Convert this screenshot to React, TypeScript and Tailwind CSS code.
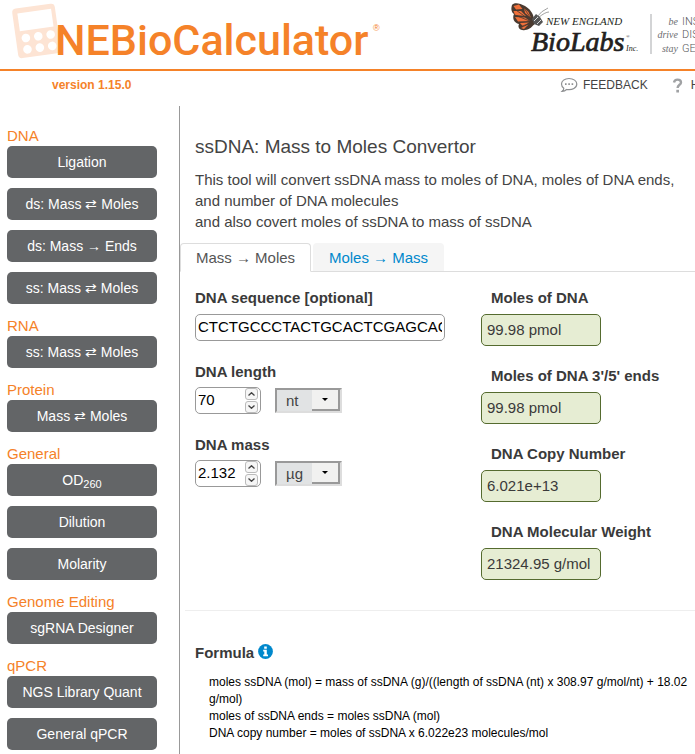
import { useState } from "react";
import type { ReactNode } from "react";

function Arrow() {
  return <span className="font-['Liberation_Serif',serif]">→</span>;
}

const groups: { title: string; items: ReactNode[] }[] = [
  {
    title: "DNA",
    items: [
      "Ligation",
      "ds: Mass ⇄ Moles",
      <>
        ds: Mass <Arrow /> Ends
      </>,
      "ss: Mass ⇄ Moles",
    ],
  },
  { title: "RNA", items: ["ss: Mass ⇄ Moles"] },
  { title: "Protein", items: ["Mass ⇄ Moles"] },
  {
    title: "General",
    items: [
      <>
        OD<sub className="text-[11px]">260</sub>
      </>,
      "Dilution",
      "Molarity",
    ],
  },
  { title: "Genome Editing", items: ["sgRNA Designer"] },
  { title: "qPCR", items: ["NGS Library Quant", "General qPCR"] },
];

const results = [
  { id: "moles", label: "Moles of DNA", value: "99.98 pmol" },
  { id: "ends", label: "Moles of DNA 3'/5' ends", value: "99.98 pmol" },
  { id: "copies", label: "DNA Copy Number", value: "6.021e+13" },
  { id: "weight", label: "DNA Molecular Weight", value: "21324.95 g/mol" },
];

function CalculatorLogo() {
  return (
    <svg className="h-[68px] w-[400px] shrink-0" viewBox="0 0 400 68" role="img" aria-label="NEBioCalculator">
      <g transform="rotate(-8 36 31)">
        <rect x="15" y="6" width="43" height="50" rx="4" fill="#fde4d4" />
        <rect x="20" y="11" width="34" height="18" fill="#fff" />
        {[0, 1, 2].map((i) => (
          <g key={i} fill="#fff">
            <circle cx={25 + i * 12.5} cy="36.500" r="4.300" />
            <circle cx={25 + i * 12.5} cy="48" r="4.300" />
          </g>
        ))}
      </g>
      <text x="55" y="55" fontSize="43" fontWeight="500" fill="#f58229" fontFamily="Roboto, sans-serif">
        NEBioCalculator
      </text>
      <text x="373" y="31" fontSize="9" fill="#f58229" fontFamily="Liberation Sans, sans-serif">
        ®
      </text>
    </svg>
  );
}

function BioLabsLogo() {
  return (
    <svg className="h-[68px] w-[270px] shrink-0" viewBox="510 0 270 68" role="img" aria-label="New England BioLabs Inc.">
      <path
        d="M512 5C514 2 520 3 525 6C530 9 533 13 534 19L536 23C532 26 530 30 525 30C521 31 517 28 519 24C514 23 512 18 514 14C511 12 511 8 512 5Z"
        fill="#4a3a30"
      />
      <path
        d="M513.500 6L519 4.500L522.500 9L516 9.500ZM513.500 11L521 11L526 16L515 15ZM524 8L528.500 12L531 18L525 13ZM515 17L525 17.500L530 21L518 21.500ZM520 23L529 22.500L523 26.500ZM521 28L528.500 24.500L524 29Z"
        fill="#f0703a"
      />
      <path d="M513 8L530 20M522 5L532 20M515 15L532 22M520 27L533 22" stroke="#4a3a30" strokeWidth="0.800" fill="none" />
      <path d="M532 19L536 14L540 17L543 22L539 26L534 24Z" fill="#555" />
      <path d="M534 21L538 17M537 24L541 20" stroke="#ddd" strokeWidth="1" />
      <path d="M537 17Q541 11 548 8M538 18Q545 12 549 12" stroke="#777" strokeWidth="0.700" fill="none" />
      <g fontFamily="Liberation Serif, serif" fontStyle="italic" fill="#231f20">
        <text x="546" y="25" fontSize="11">
          NEW ENGLAND
        </text>
        <text x="531" y="51" fontSize="28" stroke="#231f20" strokeWidth="0.700">
          BioLabs
        </text>
        <text x="626" y="51" fontSize="8">
          Inc.
        </text>
        <text x="626" y="38" fontSize="5">
          ®
        </text>
      </g>
      <path d="M651 14V54" stroke="#a7a9ac" strokeWidth="1" />
      <g fontFamily="Liberation Serif, serif" fontStyle="italic" fontSize="10" fill="#6d6e71" textAnchor="end">
        <text x="678" y="25">be</text>
        <text x="678" y="38">drive</text>
        <text x="678" y="52">stay</text>
      </g>
      <g fontFamily="Roboto, sans-serif" fontWeight="300" fontSize="11" fill="#58595b">
        <text x="682" y="25">INSPIRED</text>
        <text x="682" y="38">DISCOVERY</text>
        <text x="682" y="52">GENUINE</text>
      </g>
    </svg>
  );
}

function FeedbackIcon() {
  return (
    <svg className="h-4 w-[18px]" viewBox="0 0 18 16" fill="none" stroke="#8f9193" strokeWidth="1.200" aria-hidden="true">
      <path d="M9 1.500C4.500 1.500 1.500 4 1.500 7C1.500 8.800 2.400 10.200 3.800 11.200C3.800 12.500 3 13.600 2.200 14.300C4 14.200 5.500 13.500 6.600 12.500C12.500 13.500 16.800 10.800 16.800 7C16.800 4 13.500 1.500 9 1.500Z" />
      <path d="M5 7.200h1.600M8.300 7.200h1.600M11.600 7.200h1.600" strokeWidth="1.800" />
    </svg>
  );
}

function HelpIcon() {
  return (
    <svg className="h-[15px] w-[11px]" viewBox="0 0 11 15" fill="none" aria-hidden="true">
      <path
        d="M2 4.500C2.300 2.700 3.700 1.600 5.500 1.600C7.600 1.600 9 2.800 9 4.400C9 6.800 5.600 6.800 5.600 10"
        stroke="#a0a2a4"
        strokeWidth="2.400"
      />
      <rect x="4.300" y="11.800" width="2.700" height="2.700" fill="#a0a2a4" />
    </svg>
  );
}

function InfoIcon() {
  return (
    <svg className="mb-[3px] h-[15px] w-[15px]" viewBox="0 0 15 15" aria-hidden="true">
      <circle cx="7.500" cy="7.500" r="7.400" fill="#0088cc" />
      <path d="M6.200 2.500h2.600v2.200H6.200ZM5.200 5.700h3.600v4.700h1.200v1.800H5.200v-1.800h1.100V7.500H5.200Z" fill="#fff" />
    </svg>
  );
}

function Spinner({ id, label, initial, step }: { id: string; label: string; initial: string; step: number }) {
  const [value, setValue] = useState(initial);
  const bump = (by: number) => setValue(String(Number((Number(value) + by).toFixed(3))));
  const arrow = "flex h-3 w-[13px] items-center justify-center rounded-[3px] border border-[#bbb] bg-[#f6f6f6]";
  return (
    <div className="flex h-[27px] w-[66px] items-center rounded-[5px] border border-[#999] bg-white pr-0.5">
      <input
        id={id}
        type="text"
        inputMode="decimal"
        className="w-0 grow bg-transparent pl-0.5 text-[15px] text-black outline-none"
        value={value}
        onChange={(e) => setValue(e.target.value)}
      />
      <div className="flex flex-col gap-px">
        <button type="button" className={arrow} aria-label={"Increase " + label} onClick={() => bump(step)}>
          <svg className="h-1 w-[7px]" viewBox="0 0 7 4" fill="none" stroke="#444" strokeWidth="1.300">
            <path d="M0.500 3.500L3.500 0.700L6.500 3.500" />
          </svg>
        </button>
        <button type="button" className={arrow} aria-label={"Decrease " + label} onClick={() => bump(-step)}>
          <svg className="h-1 w-[7px]" viewBox="0 0 7 4" fill="none" stroke="#444" strokeWidth="1.300">
            <path d="M0.500 0.500L3.500 3.300L6.500 0.500" />
          </svg>
        </button>
      </div>
    </div>
  );
}

function UnitSelect({ label, options }: { label: string; options: string[] }) {
  return (
    <div className="relative h-[25px] w-[67px] border-2 border-t-[#999] border-r-[#ddd] border-b-[#ddd] border-l-[#999] bg-[#e1e3e4]">
      <select
        aria-label={label}
        className="h-full w-full appearance-none bg-transparent pl-[9px] text-[15px] leading-5 text-[#444] outline-none"
      >
        {options.map((o) => (
          <option key={o}>{o}</option>
        ))}
      </select>
      <span className="pointer-events-none absolute inset-y-0 right-0 flex w-7 items-center justify-center border-r-2 border-b-2 border-[#999] bg-[#f1f1f0]">
        <svg className="h-[3px] w-[6px]" viewBox="0 0 6 3">
          <path d="M0 0H6L3 3Z" fill="#000" />
        </svg>
      </span>
    </div>
  );
}

export default function App() {
  const [sequence, setSequence] = useState("CTCTGCCCTACTGCACTCGAGCACTGACTGCATCGAGGTCAACTGCCATGGACTTCAGCTAGCATCGATC");
  return (
    <div className="min-h-screen overflow-hidden bg-white font-['Liberation_Sans',Arial,sans-serif] text-[15px] text-[#444]">
      <header className="flex h-[71px] gap-[110px] border-b-2 border-[#f58229]">
        <CalculatorLogo />
        <BioLabsLogo />
      </header>
      <nav className="flex h-7 items-center text-xs whitespace-nowrap">
        <p className="w-[560px] shrink-0 pl-[52px] font-bold text-[#f58229]">version 1.15.0</p>
        <a href="#feedback" className="mr-6 flex shrink-0 items-center gap-[5px]">
          <FeedbackIcon />
          FEEDBACK
        </a>
        <a href="#help" className="flex shrink-0 items-center gap-2">
          <HelpIcon />
          HELP
        </a>
      </nav>

      <div className="flex pt-[7px]">
        <aside className="w-[179px] shrink-0 pt-[18px] pl-[7px]">
          {groups.map((g) => (
            <section key={g.title}>
              <h2 className="h-[22px] pt-px leading-[22px] text-[#f58229]">{g.title}</h2>
              {g.items.map((item, i) => (
                <button
                  key={i}
                  type="button"
                  className="mb-2.5 block h-8 w-[150px] rounded-[5px] bg-[#636567] text-center text-sm text-white"
                >
                  {item}
                </button>
              ))}
            </section>
          ))}
        </aside>

        <main className="min-w-0 grow border-l border-[#999]">
          <div className="px-[15px] pt-[30px]">
            <h1 className="text-[19px] leading-[22px]">ssDNA: Mass to Moles Convertor</h1>
            <p className="mt-[11px] leading-[21px]">
              This tool will convert ssDNA mass to moles of DNA, moles of DNA ends, and number of DNA molecules
              <br />
              and also covert moles of ssDNA to mass of ssDNA
            </p>
          </div>

          <div role="tablist" className="mt-[11px] flex gap-0.5 border-b border-[#ddd]">
            <button
              type="button"
              role="tab"
              aria-selected="true"
              className="-mb-px h-[29px] w-[131px] rounded-t border border-[#ddd] border-b-white bg-white pt-0.5 text-[#555]"
            >
              Mass <Arrow /> Moles
            </button>
            <button
              type="button"
              role="tab"
              aria-selected="false"
              className="h-7 w-[131px] rounded-t bg-[#f5f5f5] pt-0.5 text-[#0088cc]"
            >
              Moles <Arrow /> Mass
            </button>
          </div>

          <div className="flex pt-[15px] pl-[15px] text-[#3a3a3a]">
            <div className="flex w-[286px] shrink-0 flex-col items-start">
              <label htmlFor="sequence" className="leading-[22px] font-bold">
                DNA sequence [optional]
              </label>
              <input
                id="sequence"
                className="mt-[5px] mb-5 h-[27px] w-[250px] rounded-[5px] border border-[#999] px-0.5 pb-0.5 text-[15px] text-black"
                value={sequence}
                onChange={(e) => setSequence(e.target.value)}
              />
              <label htmlFor="length" className="leading-[22px] font-bold">
                DNA length
              </label>
              <div className="mt-1 mb-5 flex items-center gap-3.5">
                <Spinner id="length" label="length" initial="70" step={1} />
                <UnitSelect label="Length unit" options={["nt", "kb"]} />
              </div>
              <label htmlFor="mass" className="leading-[22px] font-bold">
                DNA mass
              </label>
              <div className="mt-1 flex items-center gap-3.5">
                <Spinner id="mass" label="mass" initial="2.132" step={0.1} />
                <UnitSelect label="Mass unit" options={["µg", "ng", "pg"]} />
              </div>
            </div>
            <div>
              {results.map((r) => (
                <div key={r.id} className="h-[78px]">
                  <label htmlFor={r.id} className="block pl-2.5 leading-[22px] font-bold">
                    {r.label}
                  </label>
                  <output
                    id={r.id}
                    className="mt-[5px] block h-8 w-[120px] rounded-[5px] border border-[#556b2f] bg-[#e6edd3] pl-[5px] leading-[30px] whitespace-nowrap"
                  >
                    {r.value}
                  </output>
                </div>
              ))}
            </div>
          </div>

          <hr className="mt-[11px] ml-[5px] border-[#eee]" />

          <section className="pt-[31px] pl-[15px]">
            <h2 className="flex items-center gap-1 leading-[22px] font-bold text-[#3a3a3a]">
              Formula
              <InfoIcon />
            </h2>
            <p className="mt-2.5 pl-[14px] text-xs leading-[17px] text-black">
              moles ssDNA (mol) = mass of ssDNA (g)/((length of ssDNA (nt) x 308.97 g/mol/nt) + 18.02 g/mol)
              <br />
              moles of ssDNA ends = moles ssDNA (mol)
              <br />
              DNA copy number = moles of ssDNA x 6.022e23 molecules/mol
            </p>
          </section>
        </main>
      </div>
    </div>
  );
}
